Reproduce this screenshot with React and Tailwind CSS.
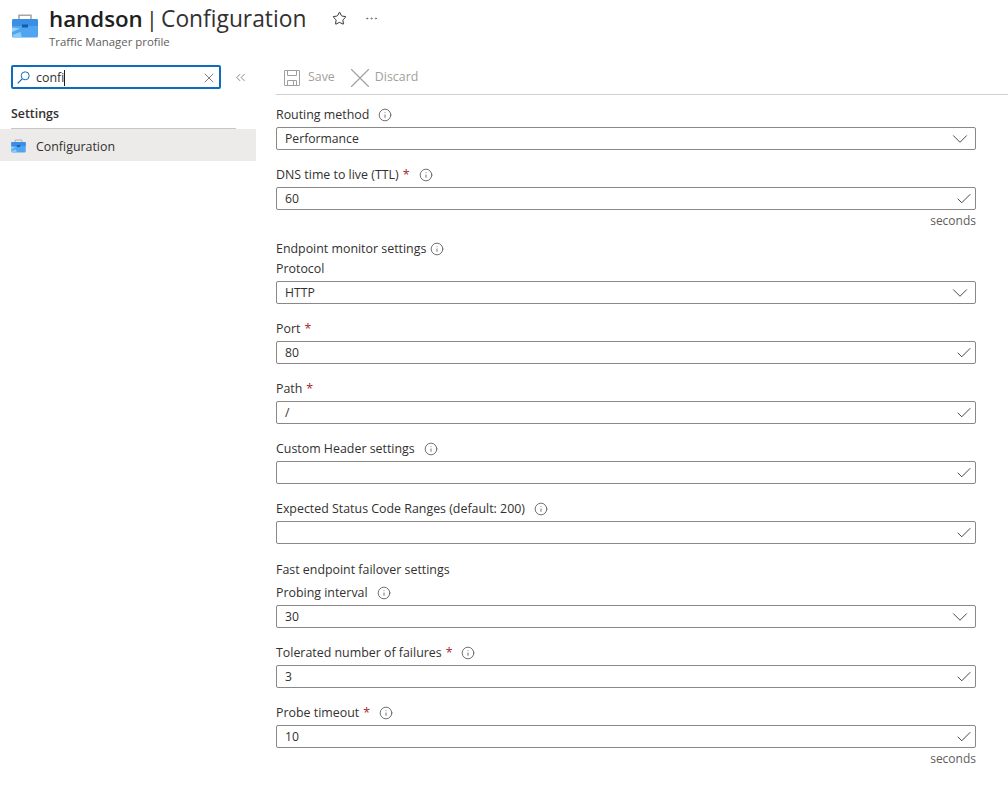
import { Check, ChevronDown, ChevronsLeft, Ellipsis, Info, Star, X } from "lucide-react";

const font = "font-['Open_Sans','Noto_Sans',sans-serif]";

function ToolboxIcon({ className }) {
  return (
    <svg viewBox="0 0 27 24" className={className}>
      <path d="M7.5 6V1.2h12V6" fill="none" stroke="#a6a6a6" strokeWidth="1.6" />
      <rect x="0.5" y="5" width="26" height="18.5" rx="1.5" fill="#4fa5f0" />
      <path d="M0.5 6.5a1.5 1.5 0 0 1 1.5-1.5h23a1.5 1.5 0 0 1 1.5 1.5V12H0.5z" fill="#3a8ee6" />
      <path d="M0.5 13.5l8 1-8 3.5z" fill="#9ad2f8" />
      <path d="M1 21l8-3 1.5 5.5H2z" fill="#8ccbf6" />
      <rect x="10.5" y="10.5" width="6" height="3" fill="#0f5cab" />
    </svg>
  );
}

function FloppyIcon({ className }) {
  return (
    <svg viewBox="0 0 16 16" fill="none" stroke="currentColor" className={className}>
      <rect x="0.5" y="0.5" width="15" height="15" rx="0.5" />
      <path d="M3.5 0.5v5h9v-5M3.5 15.5v-5h9v5M9.5 11v4" />
    </svg>
  );
}

// handle goes to the lower left, unlike the usual search glyph
function SearchIcon({ className }) {
  return (
    <svg viewBox="0 0 13 13" fill="none" stroke="currentColor" className={className}>
      <circle cx="8.2" cy="4.8" r="4" />
      <path d="M5.2 7.8 0.7 12.3" strokeWidth="1.2" />
    </svg>
  );
}

function Label({ text, required, info, gap = "ml-[9px]" }) {
  return (
    <div className="flex h-[18px] items-center pt-[2px] text-[12.4px] leading-[16px] text-[#323130]">
      <span>{text}</span>
      {required && <span className="ml-1 text-[#a4262c]">*</span>}
      {info && <Info className={`${gap} h-[14px] w-[14px] text-[#605e5c]`} strokeWidth={1.5} />}
    </div>
  );
}

function Field({ value, type = "check" }) {
  return (
    <div className="mt-[4px] flex h-[23px] items-center justify-between rounded-[2px] border border-[#8a8886] pl-2 pr-[2px] text-[12.2px] text-[#323130]">
      <span className="pt-[2px]">{value}</span>
      {type === "select" ? (
        <ChevronDown className="h-[26px] w-[26px] text-[#484644]" strokeWidth={0.9} />
      ) : (
        <Check className="h-[18px] w-[18px] text-[#323130]" strokeWidth={1.2} />
      )}
    </div>
  );
}

function Seconds() {
  return <div className="pt-[1px] text-right text-[12px] leading-[19px] text-[#605e5c]">seconds</div>;
}

export default function App() {
  return (
    <div className={`${font} h-[792px] w-[1008px] overflow-hidden bg-white`}>
      <header className="flex h-[58px]">
        <ToolboxIcon className="ml-[11px] mt-[14px] h-[24px] w-[28px]" />
        <div className="ml-[10px]">
          <div className="flex items-center">
            <h1 className="mt-[2px] h-[34px] text-[22.3px] leading-[34px] text-[#323130]">
              <span className="font-semibold text-[#201f1e]">handson</span>
              <span className="ml-[3px]">|</span>
              <span className="ml-[3px] text-[22.8px]">Configuration</span>
            </h1>
            <Star className="ml-[26px] h-[15px] w-[15px] text-[#323130]" strokeWidth={1.6} />
            <Ellipsis className="ml-[17px] h-[15px] w-[15px] text-[#605e5c]" strokeWidth={1.1} />
          </div>
          <p className="-mt-[1px] text-[11.4px] leading-[14px] text-[#605e5c]">Traffic Manager profile</p>
        </div>
      </header>

      <div className="flex">
        <aside className="w-[256px] shrink-0">
          <div className="flex items-center pl-[11px] pt-[7px]">
            <div className="flex h-[24px] w-[210px] items-center rounded-[2px] border-2 border-[#0f6cbd] pl-[4px] pr-[2px] pt-[1px] text-[12.4px] text-[#323130]">
              <SearchIcon className="h-[13px] w-[13px] text-[#0f6cbd]" />
              <span className="ml-[6px] border-r border-[#201f1e] leading-[16px]">confi</span>
              <X className="ml-auto h-[16px] w-[16px] text-[#605e5c]" strokeWidth={1.2} />
            </div>
            <ChevronsLeft className="ml-[12px] h-[15px] w-[15px] text-[#605e5c]" strokeWidth={1.2} />
          </div>
          <div className="ml-[11px] mt-[16px] text-[12.4px] font-semibold leading-[18px] text-[#323130]">Settings</div>
          <div className="ml-[11px] mr-[20px] mt-[5px] h-px bg-[#c8c6c4]" />
          <div className="flex h-[32px] items-center bg-[#edebe9] pl-[11px] pt-[2px] text-[12.4px] text-[#323130]">
            <ToolboxIcon className="h-[14px] w-[15px]" />
            <span className="ml-[10px] pt-[2px]">Configuration</span>
          </div>
        </aside>

        <main className="flex-1 pl-[20px]">
          <div className="flex h-[37px] items-center border-b border-[#d2d0ce] pl-[8px] pt-[3px] text-[12.4px] text-[#a19f9d]">
            <FloppyIcon className="h-[16px] w-[16px]" />
            <span className="ml-[8px]">Save</span>
            <X className="ml-[8px] h-[34px] w-[34px]" strokeWidth={0.8} />
            <span className="-ml-[2px]">Discard</span>
          </div>

          <div className="w-[700px] pt-[10px]">
            <Label text="Routing method" info />
            <Field value="Performance" type="select" />

            <div className="mt-[15px]">
              <Label text="DNS time to live (TTL)" required info />
              <Field value="60" />
              <Seconds />
            </div>

            <div className="mt-[9px]">
              <Label text="Endpoint monitor settings" info gap="ml-1" />
            </div>
            <div className="mt-[2px]">
              <Label text="Protocol" />
              <Field value="HTTP" type="select" />
            </div>

            <div className="mt-[15px]">
              <Label text="Port" required />
              <Field value="80" />
            </div>
            <div className="mt-[15px]">
              <Label text="Path" required />
              <Field value="/" />
            </div>
            <div className="mt-[15px]">
              <Label text="Custom Header settings" info />
              <Field value="" />
            </div>
            <div className="mt-[15px]">
              <Label text="Expected Status Code Ranges (default: 200)" info />
              <Field value="" />
            </div>

            <div className="mt-[16px]">
              <Label text="Fast endpoint failover settings" />
            </div>
            <div className="mt-[5px]">
              <Label text="Probing interval" info />
              <Field value="30" type="select" />
            </div>
            <div className="mt-[15px]">
              <Label text="Tolerated number of failures" required info />
              <Field value="3" />
            </div>
            <div className="mt-[15px]">
              <Label text="Probe timeout" required info />
              <Field value="10" />
              <Seconds />
            </div>
          </div>
        </main>
      </div>
    </div>
  );
}
